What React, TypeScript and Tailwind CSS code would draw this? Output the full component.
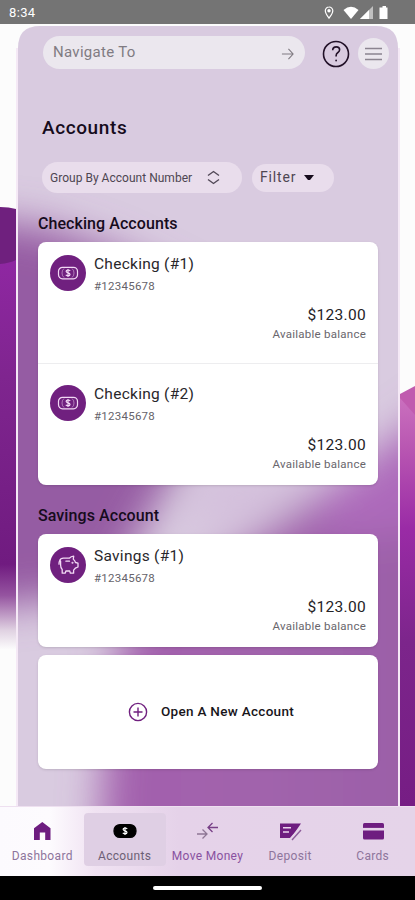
import React from "react";

function Backdrop() {
  return (
    <svg className="absolute inset-0 h-[900px] w-[415px]" viewBox="0 0 415 900" aria-hidden="true">
      <defs>
        <linearGradient id="left" x1="0" y1="0" x2="0" y2="1">
          <stop offset="0" stopColor="#8f27a2" />
          <stop offset="0.3" stopColor="#7f258f" />
          <stop offset="0.78" stopColor="#701b80" />
          <stop offset="0.86" stopColor="#9554a0" />
          <stop offset="0.95" stopColor="#e0d2e2" />
          <stop offset="1" stopColor="#fdfdfd" />
        </linearGradient>
        <linearGradient id="right" x1="0" y1="0" x2="0" y2="1">
          <stop offset="0" stopColor="#ca70be" />
          <stop offset="0.12" stopColor="#b957b2" />
          <stop offset="0.32" stopColor="#9a2ba6" />
          <stop offset="0.6" stopColor="#7c258b" />
          <stop offset="1" stopColor="#761d84" />
        </linearGradient>
        <linearGradient id="haze" x1="0" y1="0" x2="1" y2="0">
          <stop offset="0" stopColor="#a360ad" />
          <stop offset="0.45" stopColor="#a163ac" />
          <stop offset="1" stopColor="#995fa6" />
        </linearGradient>
        <filter id="soft" x="-30%" y="-30%" width="160%" height="160%">
          <feGaussianBlur stdDeviation="20" />
        </filter>
        <clipPath id="panel">
          <path d="M18 806V48Q18 26 40 26H376Q398 26 398 48V806Z" />
        </clipPath>
      </defs>
      <rect width="415" height="900" fill="#fcfcfc" />
      <path d="M0 207Q9 207 16 209V265H0Z" fill="#6f207e" />
      <path d="M0 264Q10 263 16 260V650H0Z" fill="url(#left)" />
      <path d="M400 394L415 386V416L400 406Z" fill="#c05baf" />
      <path d="M400 398L415 415V806H400Z" fill="url(#right)" />
      <path d="M16 806V48H18V806ZM398 806V48H400V806Z" fill="#f5e9f6" />
      <g clipPath="url(#panel)">
        <rect x="18" y="26" width="380" height="780" fill="#d9cbe0" />
        <g filter="url(#soft)">
          <path d="M-40 219L40 226L110 250L190 290L190 450L155 505L125 560L85 596L-40 610Z" fill="#955ba3" />
          <path d="M470 385L380 450L282 521L190 578L122 636L107 700L98 870H470Z" fill="url(#haze)" />
          <path d="M470 405L385 450L310 500L340 540L470 525Z" fill="#ad6abb" />
          <path d="M210 478L350 472L265 512L180 528Z" fill="#d3bddb" />
        </g>
      </g>
    </svg>
  );
}

function StatusBar() {
  return (
    <header className="relative flex h-6 items-center justify-between bg-[#747474] pr-[26px] pl-[9px] text-white">
      <span className="pt-[2px] text-[13px] leading-5 tracking-[0.35px]">8:34</span>
      <svg width="65" height="16" viewBox="0 0 65 16" fill="currentColor" className="mt-[1px]">
        <path d="M5 2a3.7 3.7 0 0 0-3.7 3.8C1.3 8.4 5 13.2 5 13.2s3.8-4.8 3.8-7.4A3.7 3.7 0 0 0 5 2Z" fill="none" stroke="currentColor" strokeWidth="1.2" />
        <circle cx="5" cy="5.7" r="1.7" />
        <path d="M19.5 5Q27 -1.5 34.5 5L27 14Z" />
        <path d="M36 14L49 1V14Z" fillOpacity="0.55" />
        <path d="M36 14L45 5V14Z" />
        <path d="M57 2.4H58.5V1H62V2.4H63.5V14H55.5V2.4Z" />
      </svg>
    </header>
  );
}

function MoneyIcon({ solid = false }: { solid?: boolean }) {
  return (
    <svg width="24" height="16" viewBox="0 0 24 16" fill="none" stroke="currentColor" strokeWidth="1.2">
      <rect x={solid ? 1 : 2.5} y={solid ? 1.5 : 2.3} width={solid ? 22 : 19} height={solid ? 13 : 11.5} rx={solid ? 6 : 4} fill={solid ? "currentColor" : "none"} />
      {!solid && <path d="M8 3.5Q6 5 6 8t2 4.5M16 3.5Q18 5 18 8t-2 4.5" strokeWidth="0.7" strokeOpacity="0.7" />}
      <path d="M14.2 5.8Q13.6 5 12 5q-1.9 0-1.9 1.3 0 1.1 1.9 1.5 2 .4 2 1.6 0 1.4-2 1.4-1.5 0-2.2-.9M12 3.9v8" stroke={solid ? "#fff" : "currentColor"} strokeWidth="1.2" />
    </svg>
  );
}

function PiggyIcon() {
  return (
    <svg width="23" height="22" viewBox="0 0 22 22" fill="none" stroke="currentColor" strokeWidth="1.3" strokeLinejoin="round" strokeLinecap="round">
      <path d="M6 4.2H11.8Q13.5 2.4 16.2 2.1L15.8 5.2Q17.5 6.5 18 8.5L20.5 9.1V13L17.8 14.2L16.1 16.1V19.2H12.9L12.2 17H8.4L7.8 19.2H4.7V15.5Q3.1 14 3.1 11V7.2M6 4.2Q3 4.2 2 7Q1.4 8.5 1.5 10.2M8.4 7.2H12" />
      <circle cx="15" cy="8.7" r=".4" fill="currentColor" />
    </svg>
  );
}

type AccountProps = { name: string; savings?: boolean };

function Account({ name, savings = false }: AccountProps) {
  return (
    <div className="flex h-[113px] flex-col justify-between px-3 pt-3 pb-3">
      <div className="flex gap-[9px]">
        <div className="mt-[1px] flex size-9 items-center justify-center rounded-full bg-[#70207f] text-[#f2d9f5]">
          {savings ? <PiggyIcon /> : <MoneyIcon />}
        </div>
        <div className="-ml-px">
          <h3 className="text-[15.5px] leading-[21px] tracking-[0.27px] text-[#29272b]">{name}</h3>
          <p className="pt-[2px] text-[11.5px] leading-[18px] tracking-[0.25px] text-[#66636a]">#12345678</p>
        </div>
      </div>
      <div className="text-right">
        <p className="text-[15.5px] leading-5 tracking-[0.3px] text-[#252326]">$123.00</p>
        <p className="text-[11.5px] leading-[18px] tracking-[0.25px] text-[#69666c]">Available balance</p>
      </div>
    </div>
  );
}

function Toolbar() {
  return (
    <div className="flex w-[350px] items-center">
      <div className="flex h-[33px] w-[262px] shrink-0 items-center justify-between rounded-full bg-[#ebe7ee] pr-[11px] pl-[10px] text-[#807b82]">
        <span className="text-[15px] tracking-[0.3px]">Navigate To</span>
        <svg width="13" height="14" viewBox="0 0 14 14" fill="none" stroke="currentColor" strokeWidth="1.2" className="mt-[3px]"><path d="M1 7h12M8 1.5 13 7l-5 5.5" /></svg>
      </div>
      <svg width="28" height="28" viewBox="0 0 28 28" className="mt-[2px] ml-[17px] shrink-0" fill="none" stroke="#211027" strokeWidth="1.6">
        <circle cx="14" cy="14" r="12.5" />
        <path d="M10.7 10.2q.1-3.3 3.6-3.3 3.3 0 3.3 2.8 0 1.6-1.7 2.8-1.8 1.2-1.8 3.2v.8" />
        <circle cx="14.1" cy="20.5" r=".9" fill="#211027" stroke="none" />
      </svg>
      <button aria-label="Menu" className="mt-[2px] ml-2 flex size-[31px] shrink-0 items-center justify-center rounded-full bg-[#ebe7ee] text-[#8b8490]">
        <svg width="17" height="14" viewBox="0 0 17 14" stroke="currentColor" strokeWidth="1.3"><path d="M0 1.5h17M0 7h17M0 12.5h17" /></svg>
      </button>
    </div>
  );
}

function NavIcon({ name }: { name: string }) {
  if (name === "Accounts") return <MoneyIcon solid />;
  return (
    <svg width="24" height="20" viewBox="0 0 24 20" fill="none" stroke="currentColor" strokeWidth="1.4" className="overflow-visible">
      {name === "Dashboard" && <path d="M4 7.3 12.3 1l8.2 6.3V19h-5.3v-7.5H9.8V19H4Z" fill="currentColor" stroke="none" />}
      {name === "Move Money" && <><path d="M2 13h10M7.5 8.5 12 13l-4.5 4.5" stroke="#8e7795" strokeWidth="1.3" /><path d="M23 6.5H13M17.5 2 13 6.5l4.5 4.5" stroke="#784087" strokeWidth="1.3" /></>}
      {name === "Deposit" && <><path d="M2 2.5h21L13 17H2Z" fill="currentColor" stroke="none" /><path d="M5 6.7h8M5 11h6" stroke="#ead3ed" /><path d="m22 8-9 10" strokeWidth="3" stroke="#e5d3e9" /><path d="m23 9-9 10" strokeWidth="1.4" stroke="#8d5d9b" /></>}
      {name === "Cards" && <><rect x="2" y="2" width="21" height="16.5" rx="1.5" fill="currentColor" stroke="none" /><path d="M2 8.2h21" strokeWidth="2.6" stroke="#e5d3e9" /></>}
    </svg>
  );
}

function Navigation() {
  const entries = ["Dashboard", "Accounts", "Move Money", "Deposit", "Cards"];
  return (
    <nav className="relative h-[70px] border-t border-[#eee0f0] bg-[linear-gradient(90deg,#fcfafe_0%,#fdfbfe_12%,#f0e2f2_23%,#e5d2e9_43%,#e5d4e9_100%)]">
      <div className="grid h-full grid-cols-5 px-[1px]">
        {entries.map((name) => (
          <div key={name} className={name === "Accounts" ? "mt-[6px] h-[53px] w-[82px] rounded bg-[#dfcfe4] pt-[8px] text-center" : "pt-[14px] text-center"}>
            <div className={name === "Accounts" ? "flex h-5 items-center justify-center text-black" : "flex h-5 items-center justify-center text-[#6e1d80]"}><NavIcon name={name} /></div>
            <span className={name === "Accounts" ? "mt-[7px] block text-[12px] leading-4 tracking-[0.32px] whitespace-nowrap text-[#6d5f75]" : name === "Move Money" ? "mt-[7px] block text-[12px] leading-4 tracking-[0.32px] whitespace-nowrap text-[#8951a0]" : "mt-[7px] block text-[12px] leading-4 tracking-[0.32px] whitespace-nowrap text-[#8e759c]"}>{name}</span>
          </div>
        ))}
      </div>
    </nav>
  );
}

export default function App() {
  return (
    <div className="relative flex h-[900px] w-[415px] flex-col overflow-hidden font-[Roboto,sans-serif]">
      <Backdrop />
      <StatusBar />
      <main className="relative h-[782px] px-[38px]">
        <div className="pt-3 pl-[5px]"><Toolbar /></div>
        <h1 className="mt-[45px] ml-1 text-[19px] leading-7 font-medium tracking-[0.6px] text-[#160b1c]">Accounts</h1>
        <div className="mt-5 ml-1 flex items-center gap-[10px] text-[#4e4652]">
          <button className="flex h-[31px] w-[200px] items-center justify-between rounded-full bg-[#e9ddec] pr-[22px] pl-2 text-[12px] tracking-[0.02px]">
            <span>Group By Account Number</span>
            <svg width="13" height="15" viewBox="0 0 13 15" fill="none" stroke="#514857" strokeWidth="1.4"><path d="m1 5.5 5.5-4L12 5.5M1 9.5l5.5 4 5.5-4" /></svg>
          </button>
          <button className="flex h-7 w-[82px] items-center gap-[8px] rounded-full bg-[#e9ddec] pl-2 text-[14px] tracking-[0.85px]">
            <span>Filter</span><svg width="10" height="6" viewBox="0 0 10 6" fill="#160b1c"><path d="M0 0h10L6 5H4Z" /></svg>
          </button>
        </div>
        <h2 className="mt-[19px] text-[16px] leading-6 font-medium tracking-[0.07px] text-[#160b1c]">Checking Accounts</h2>
        <section className="mt-[6px] h-[243px] w-[340px] rounded-lg bg-white shadow-sm">
          <Account name="Checking (#1)" />
          <div className="mt-2 h-px bg-[#ededef]" />
          <div className="pt-2"><Account name="Checking (#2)" /></div>
        </section>
        <h2 className="mt-[19px] text-[16px] leading-6 font-medium tracking-[0.08px] text-[#160b1c]">Savings Account</h2>
        <section className="mt-[6px] h-[113px] w-[340px] rounded-lg bg-white shadow-sm"><Account name="Savings (#1)" savings /></section>
        <button className="mt-2 flex h-[114px] w-[340px] items-center justify-center gap-[13px] rounded-lg bg-white pb-[1px] pl-[6px] text-[13.5px] font-medium tracking-[0.3px] text-[#18151a] shadow-sm">
          <svg width="20" height="20" viewBox="0 0 20 20" fill="none" stroke="#70207f" strokeWidth="1.4"><circle cx="10" cy="10" r="8.6" /><path d="M10 5.5v9M5.5 10h9" /></svg>
          Open A New Account
        </button>
      </main>
      <Navigation />
      <footer className="relative flex h-6 items-center justify-center bg-black"><div className="h-1 w-[109px] rounded-full bg-white" /></footer>
    </div>
  );
}
